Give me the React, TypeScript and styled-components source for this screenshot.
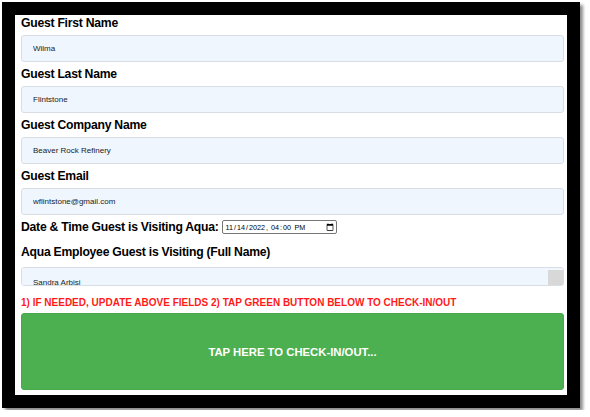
import React from "react";
import styled, { createGlobalStyle } from "styled-components";

const Global = createGlobalStyle`
  html, body { margin: 0; padding: 0; background: #fff; }
  body { font-family: "Liberation Sans", Arial, sans-serif; }
  * { box-sizing: border-box; }
`;

const Frame = styled.div`
  margin: 2px;
  width: 578px;
  height: 406px;
  border: 13px solid #000;
  background: #fff;
  box-shadow: 3px 3px 3px rgba(0, 0, 0, 0.45);
  padding: 0 3px 0 6px;
  display: flex;
  flex-direction: column;
`;

const Label = styled.label<{ $mt?: number; $mb?: number }>`
  display: block;
  font-family: "Liberation Sans", Arial, sans-serif;
  font-weight: bold;
  font-size: 12.2px;
  letter-spacing: -0.25px;
  line-height: 16px;
  color: #000;
  margin-top: ${(p) => p.$mt ?? 0}px;
  margin-bottom: ${(p) => p.$mb ?? 4}px;
`;

const TextInput = styled.input`
  display: block;
  width: 100%;
  height: 27px;
  margin: 0 0 4px 0;
  padding: 0 11px;
  border: 1px solid #d9dee4;
  border-radius: 3px;
  background: #f0f6fe;
  font-family: "Liberation Sans", Arial, sans-serif;
  font-size: 8px;
  color: #222;
  outline: none;
`;

const DateRow = styled.div`
  display: flex;
  align-items: center;
  height: 16px;
  gap: 3px;
`;

const InlineLabel = styled.label`
  font-family: "Liberation Sans", Arial, sans-serif;
  font-weight: bold;
  font-size: 12.2px;
  letter-spacing: -0.25px;
  line-height: 16px;
  color: #000;
`;

const DateInput = styled.input`
  width: 115px;
  height: 14px;
  padding: 0 2px;
  border: 1px solid #767676;
  border-radius: 2px;
  background: #fff;
  font-family: "Liberation Sans", Arial, sans-serif;
  font-size: 7.2px;
  color: #000;
  outline: none;
  &::-webkit-calendar-picker-indicator {
    margin: 0;
    padding: 0;
    width: 8px;
    height: 8px;
  }
`;

const Area = styled.textarea`
  display: block;
  width: 100%;
  height: 19px;
  margin: 0;
  padding: 9px 11px 0;
  border: 1px solid #d9dee4;
  border-radius: 3px;
  background: #f0f6fe;
  font-family: "Liberation Sans", Arial, sans-serif;
  font-size: 8px;
  line-height: 12px;
  color: #222;
  outline: none;
  resize: vertical;
  overflow-y: scroll;
  &::-webkit-scrollbar { width: 10px; }
  &::-webkit-scrollbar-track { background: #eef2f6; }
  &::-webkit-scrollbar-thumb { background: #e4e8ec; }
  &::-webkit-scrollbar-button:single-button:vertical:decrement {
    display: block;
    height: 6px;
    background: #eef2f6;
  }
  &::-webkit-resizer { background: #d8d8d8; }
`;

const Note = styled.div`
  margin-top: 11px;
  margin-bottom: 4px;
  font-family: "Liberation Sans Narrow", "Liberation Sans", Arial, sans-serif;
  font-weight: bold;
  font-size: 10px;
  line-height: 12px;
  color: #ff1a1a;
  white-space: nowrap;
`;

const GoButton = styled.button`
  width: 100%;
  height: 77px;
  border: 1px solid #46a84a;
  border-radius: 3px;
  background: #4caf50;
  color: #fff;
  font-family: "Liberation Sans", Arial, sans-serif;
  font-weight: bold;
  font-size: 11.3px;
  cursor: pointer;
  padding: 0;
`;

const fields = [
  { label: "Guest First Name", value: "Wilma" },
  { label: "Guest Last Name", value: "Flintstone" },
  { label: "Guest Company Name", value: "Beaver Rock Refinery" },
  { label: "Guest Email", value: "wflintstone@gmail.com" },
];

export default function App() {
  return (
    <>
      <Global />
      <Frame>
        {fields.map((f) => (
          <React.Fragment key={f.label}>
            <Label>{f.label}</Label>
            <TextInput defaultValue={f.value} />
          </React.Fragment>
        ))}
        <DateRow>
          <InlineLabel>Date &amp; Time Guest is Visiting Aqua:</InlineLabel>
          <DateInput type="datetime-local" defaultValue="2022-11-14T16:00" />
        </DateRow>
        <Label $mt={9} $mb={7}>Aqua Employee Guest is Visiting (Full Name)</Label>
        <Area defaultValue={"Sandra Arbisi"} />
        <Note>1) IF NEEDED, UPDATE ABOVE FIELDS 2) TAP GREEN BUTTON BELOW TO CHECK-IN/OUT</Note>
        <GoButton>TAP HERE TO CHECK-IN/OUT...</GoButton>
      </Frame>
    </>
  );
}
